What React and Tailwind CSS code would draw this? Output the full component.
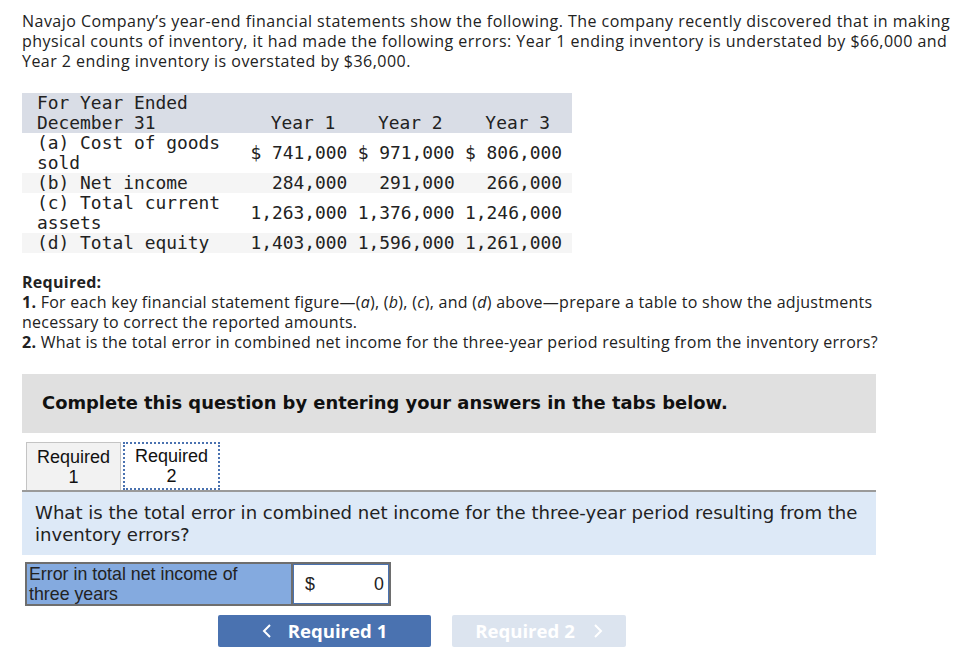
const rows = [
  { label: ["(a) Cost of goods", "sold"], vals: ["$ 741,000", "$ 971,000", "$ 806,000"], bg: "bg-white" },
  { label: ["(b) Net income"], vals: ["284,000", "291,000", "266,000"], bg: "bg-[#f5f5f5]" },
  { label: ["(c) Total current", "assets"], vals: ["1,263,000", "1,376,000", "1,246,000"], bg: "bg-white" },
  { label: ["(d) Total equity"], vals: ["1,403,000", "1,596,000", "1,261,000"], bg: "bg-[#f5f5f5]" },
];

const App = () => {
  return (
    <div className="pl-[22px] pt-[11px] pb-6 text-[#222] font-['Open_Sans',sans-serif]">
      {/* intro */}
      <p className="whitespace-nowrap text-[16px] leading-[20px] tracking-[0.47px]">
        Navajo Company’s year-end financial statements show the following. The company recently discovered that in making
        <br />physical counts of inventory, it had made the following errors: Year 1 ending inventory is understated by $66,000 and
        <br />Year 2 ending inventory is overstated by $36,000.
      </p>

      {/* data table */}
      <table className="mt-[22px] w-[550px] table-fixed font-['DejaVu_Sans_Mono',monospace] text-[17.9px] leading-[20px] text-[#222] border-collapse">
        <colgroup>
          <col className="w-[228px]" />
          <col />
          <col />
          <col />
        </colgroup>
        <thead>
          <tr className="bg-[#d9dde6]">
            <th className="text-left font-normal pl-[15px]">For Year Ended<br />December 31</th>
            <th className="text-right font-normal align-bottom pr-[22px]">Year 1</th>
            <th className="text-right font-normal align-bottom pr-[22px]">Year 2</th>
            <th className="text-right font-normal align-bottom pr-[22px]">Year 3</th>
          </tr>
        </thead>
        <tbody>
          {rows.map((r) => (
            <tr key={r.label[0]} className={r.bg}>
              <td className="pl-[15px] align-top">
                {r.label.map((l) => (
                  <div key={l}>{l}</div>
                ))}
              </td>
              {r.vals.map((v, i) => (
                <td key={i} className="text-right whitespace-pre align-middle pr-[10px]">{v}</td>
              ))}
            </tr>
          ))}
        </tbody>
      </table>

      {/* required */}
      <div className="mt-[19px] whitespace-nowrap text-[16px] leading-[20px] tracking-[0.27px]">
        <p className="font-bold">Required:</p>
        <p><span className="font-bold">1.</span> For each key financial statement figure—(<i>a</i>), (<i>b</i>), (<i>c</i>), and (<i>d</i>) above—prepare a table to show the adjustments</p>
        <p>necessary to correct the reported amounts.</p>
        <p><span className="font-bold">2.</span> What is the total error in combined net income for the three-year period resulting from the inventory errors?</p>
      </div>

      {/* answer panel */}
      <div className="w-[854px] mt-[22px]">
        <div className="bg-[#e0e0e0] h-[59px] flex items-center pl-[20px] font-['DejaVu_Sans',sans-serif] font-bold text-[17.9px] text-[#111]">
          Complete this question by entering your answers in the tabs below.
        </div>

        <div className="mt-[9px] flex pl-[4px] items-end font-['Liberation_Sans',sans-serif] text-[18px] leading-[20px] text-[#111]">
          <div className="w-[95px] h-[48px] bg-[#f2f2f2] border border-[#c4c4c4] border-b-0 flex flex-col items-center justify-center">
            <span>Required</span>
            <span>1</span>
          </div>
          <div className="w-[97px] h-[48px] ml-[2px] bg-white border-2 border-dotted border-[#4a72b0] flex flex-col items-center justify-center">
            <span>Required</span>
            <span>2</span>
          </div>
        </div>
        <div className="h-[2px] bg-[#9a9a9a]" />

        <div className="bg-[#dde9f7] h-[63px] pl-[13px] pt-[10px] font-['DejaVu_Sans',sans-serif] text-[18.1px] leading-[22px] text-[#222] whitespace-nowrap">
          What is the total error in combined net income for the three-year period resulting from the
          <br />inventory errors?
        </div>

        <div className="mt-[7px] ml-[3px] flex w-[366px] border-2 border-[#6e6e6e] bg-[#6e6e6e] font-['Liberation_Sans',sans-serif] text-[17.8px] leading-[20px] text-[#222]">
          <div className="w-[264px] bg-[#84aadf] px-[2px] h-[40px] whitespace-nowrap">
            Error in total net income of<br />three years
          </div>
          <div className="flex-1 ml-[2px] bg-white border border-[#4a72b0] flex items-center justify-between pl-[11px] pr-[4px]">
            <span>$</span>
            <span>0</span>
          </div>
        </div>

        <div className="mt-[9px] ml-[196px] flex gap-[21px] font-['Open_Sans',sans-serif] font-bold text-[18.6px]">
          <div className="w-[213px] h-[32px] bg-[#4a72b0] rounded-[2px] text-white flex items-center justify-center gap-[16px]">
            <svg width="10" height="16" viewBox="0 0 10 16" fill="none" stroke="white" strokeWidth="2">
              <path d="M8 2 L2 8 L8 14" />
            </svg>
            <span>Required 1</span>
          </div>
          <div className="w-[174px] h-[32px] bg-[#dce4ef] rounded-[2px] text-white flex items-center justify-center gap-[18px]">
            <span>Required 2</span>
            <svg width="10" height="16" viewBox="0 0 10 16" fill="none" stroke="white" strokeWidth="2">
              <path d="M2 2 L8 8 L2 14" />
            </svg>
          </div>
        </div>
      </div>
    </div>
  );
};

export default App;
